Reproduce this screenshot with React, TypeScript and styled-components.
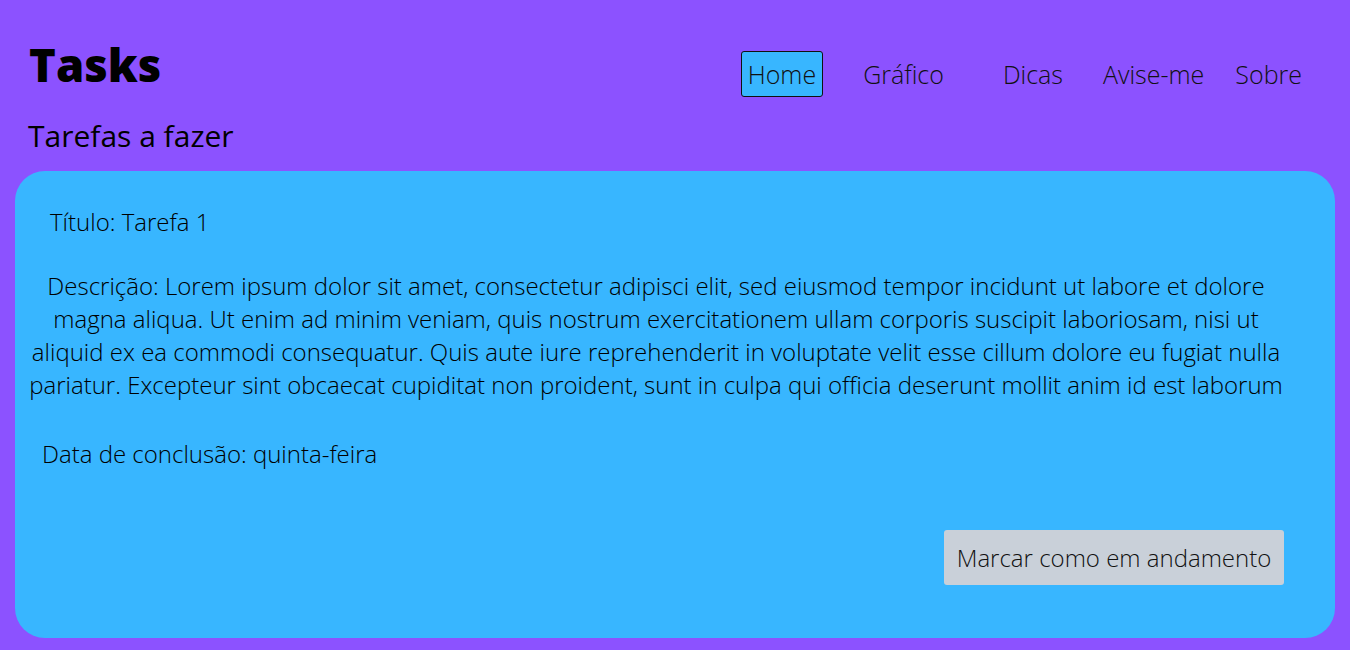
import React from "react";
import styled, { createGlobalStyle } from "styled-components";

const Global = createGlobalStyle`
  html, body { margin: 0; padding: 0; background: #8c52ff; }
  body { font-family: "Open Sans", "Liberation Sans", sans-serif; color: #000; }
  * { box-sizing: border-box; }
`;

const Page = styled.div`
  width: 1350px;
  height: 650px;
  background: #8c52ff;
  padding: 0 15px;
  overflow: hidden;
`;

const Header = styled.header`
  display: flex;
  justify-content: space-between;
  align-items: flex-start;
  padding: 36px 0 0 14px;
`;

const Logo = styled.h1`
  margin: 0;
  font-size: 45.5px;
  font-weight: 800;
  line-height: 56px;
`;

const Nav = styled.nav`
  display: flex;
  align-items: center;
  margin-top: 15px;
  margin-right: 32px;
`;

const NavLink = styled.a<{ $active?: boolean; $ml: number }>`
  margin-left: ${(p) => p.$ml}px;
  font-size: 25px;
  font-weight: 300;
  line-height: 44px;
  color: #111;
  text-decoration: none;
  padding: 0 ${(p) => (p.$active ? 6 : 0)}px;
  border: 1px solid ${(p) => (p.$active ? "#111" : "transparent")};
  border-radius: 3px;
  background: ${(p) => (p.$active ? "#38b6ff" : "transparent")};
`;

const Subtitle = styled.h2`
  margin: 19px 0 0 13px;
  font-size: 30px;
  font-weight: 400;
  line-height: 40px;
`;

const Card = styled.section`
  margin-top: 15px;
  height: 467px;
  background: #38b6ff;
  border-radius: 30px;
  padding: 34px 51px 0 13px;
  display: flex;
  flex-direction: column;
`;

const Line = styled.p<{ $indent?: number; $center?: boolean }>`
  margin: 0;
  font-size: 24px;
  font-weight: 300;
  line-height: 33px;
  padding-left: ${(p) => p.$indent ?? 0}px;
  text-align: ${(p) => (p.$center ? "center" : "left")};
`;

const Gap = styled.div<{ $h: number }>`
  height: ${(p) => p.$h}px;
`;

const Actions = styled.div`
  display: flex;
  justify-content: flex-end;
  margin-top: 60px;
`;

const Button = styled.button`
  font-family: inherit;
  font-size: 24px;
  font-weight: 300;
  color: #111;
  background: #c9d0d9;
  border: none;
  border-radius: 3px;
  height: 55px;
  width: 340px;
  padding: 0;
`;

export default function App() {
  return (
    <Page>
      <Global />
      <Header>
        <Logo>Tasks</Logo>
        <Nav>
          <NavLink $ml={0} $active href="#">Home</NavLink>
          <NavLink $ml={39} href="#">Gráfico</NavLink>
          <NavLink $ml={57} href="#">Dicas</NavLink>
          <NavLink $ml={38} href="#">Avise-me</NavLink>
          <NavLink $ml={29} href="#">Sobre</NavLink>
        </Nav>
      </Header>
      <Subtitle>Tarefas a fazer</Subtitle>
      <Card>
        <Line $indent={22}>Título: Tarefa 1</Line>
        <Gap $h={31} />
        <Line $center>
          Descrição: Lorem ipsum dolor sit amet, consectetur adipisci elit, sed eiusmod tempor incidunt ut labore et dolore magna aliqua. Ut enim ad minim veniam, quis nostrum exercitationem ullam corporis suscipit laboriosam, nisi ut aliquid ex ea commodi consequatur. Quis aute iure reprehenderit in voluptate velit esse cillum dolore eu fugiat nulla pariatur. Excepteur sint obcaecat cupiditat non proident, sunt in culpa qui officia deserunt mollit anim id est laborum
        </Line>
        <Gap $h={36} />
        <Line $indent={14}>Data de conclusão: quinta-feira</Line>
        <Actions>
          <Button>Marcar como em andamento</Button>
        </Actions>
      </Card>
    </Page>
  );
}
